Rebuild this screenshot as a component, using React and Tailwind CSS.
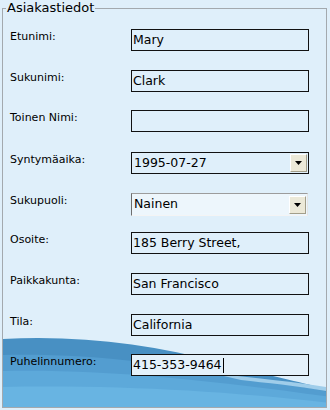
import React from "react";

const rows = [
  { label: "Etunimi:", value: "Mary", type: "text", h: "h-[41px]" },
  { label: "Sukunimi:", value: "Clark", type: "text", h: "h-[40px]" },
  { label: "Toinen Nimi:", value: "", type: "text", h: "h-[42px]" },
  { label: "Syntymäaika:", value: "1995-07-27", type: "date", h: "h-[41px]" },
  { label: "Sukupuoli:", value: "Nainen", type: "combo", h: "h-[39px]" },
  { label: "Osoite:", value: "185 Berry Street,", type: "text", h: "h-[41px]" },
  { label: "Paikkakunta:", value: "San Francisco", type: "text", h: "h-[41px]" },
  { label: "Tila:", value: "California", type: "text", h: "h-[40px]" },
  { label: "Puhelinnumero:", value: "415-353-9464", type: "phone", h: "h-[40px]" },
];

function DropButton() {
  return (
    <div className="ml-auto mr-px flex h-[18px] w-[17px] items-center justify-center border border-t-white border-l-white border-b-[#a39e8a] border-r-[#a39e8a] bg-[#ece9d8]">
      <svg width="7" height="4" viewBox="0 0 7 4">
        <path d="M0 0 H7 L3.5 4 Z" fill="#000" />
      </svg>
    </div>
  );
}

function Field({ row }) {
  if (row.type === "date") {
    return (
      <div className="flex h-[22px] w-[178px] items-center border border-[#111]">
        <span className="pl-[2px] leading-none">{row.value}</span>
        <DropButton />
      </div>
    );
  }
  if (row.type === "combo") {
    return (
      <div className="flex h-[23px] w-[177px] items-center border border-t-[#9c9c9c] border-l-[#6e6e6e] border-b-[#f4f4f4] border-r-[#e4e4e4] bg-[#edf6fc]">
        <span className="pl-[2px] leading-none">{row.value}</span>
        <DropButton />
      </div>
    );
  }
  if (row.type === "phone") {
    return (
      <div className="flex h-[22px] w-[178px] items-center border border-[#111] bg-[#e4f1fa]">
        <span className="pl-[1px] leading-none">{row.value}</span>
        <span className="ml-px h-[15px] w-px bg-black" />
      </div>
    );
  }
  return (
    <div className="flex h-[22px] w-[178px] items-center border border-[#111]">
      <span className="pl-[1px] leading-none">{row.value}</span>
    </div>
  );
}

export default function App() {
  return (
    <div
      className="relative h-[410px] w-[330px] overflow-hidden bg-[#dfeffa] text-black"
      style={{ fontFamily: '"DejaVu Sans", Verdana, sans-serif' }}
    >
      <div className="absolute left-[2px] top-[8px] h-[400px] w-[325px] overflow-hidden border border-[#a3a9ae]">
        <svg
          className="absolute left-0 top-0"
          width="325"
          height="400"
          viewBox="2 8 325 400"
        >
          <path d="M0 338 C 80 334 150 343 220 362 C 270 376 300 380 330 390 L330 410 L0 410 Z" fill="#4890c3" />
          <path d="M0 354 C 90 352 170 363 250 378 C 285 384 310 386 330 392 L330 410 L0 410 Z" fill="#539dd0" />
          <path d="M0 370 C 100 368 200 378 330 396 L330 410 L0 410 Z" fill="#5da9da" />
          <path d="M0 386 C 120 384 220 390 330 402 L330 410 L0 410 Z" fill="#68b4e2" />
          <path d="M210 372 C 260 378 300 381 330 387 L330 391 C 300 385 265 382 240 379 Z" fill="#9fcdea" />
        </svg>
      </div>
      <div className="absolute left-[6px] top-0 bg-[#dfeffa] px-px text-[13px] leading-[16px]">
        Asiakastiedot
      </div>
      <div className="relative flex flex-col pt-[29px] text-[12.5px]">
        {rows.map((row) => (
          <div key={row.label} className={`flex ${row.h}`}>
            <div className="w-[131px] pl-[10px] pt-[1px] text-[11px] leading-[14px]">{row.label}</div>
            <Field row={row} />
          </div>
        ))}
      </div>
    </div>
  );
}
